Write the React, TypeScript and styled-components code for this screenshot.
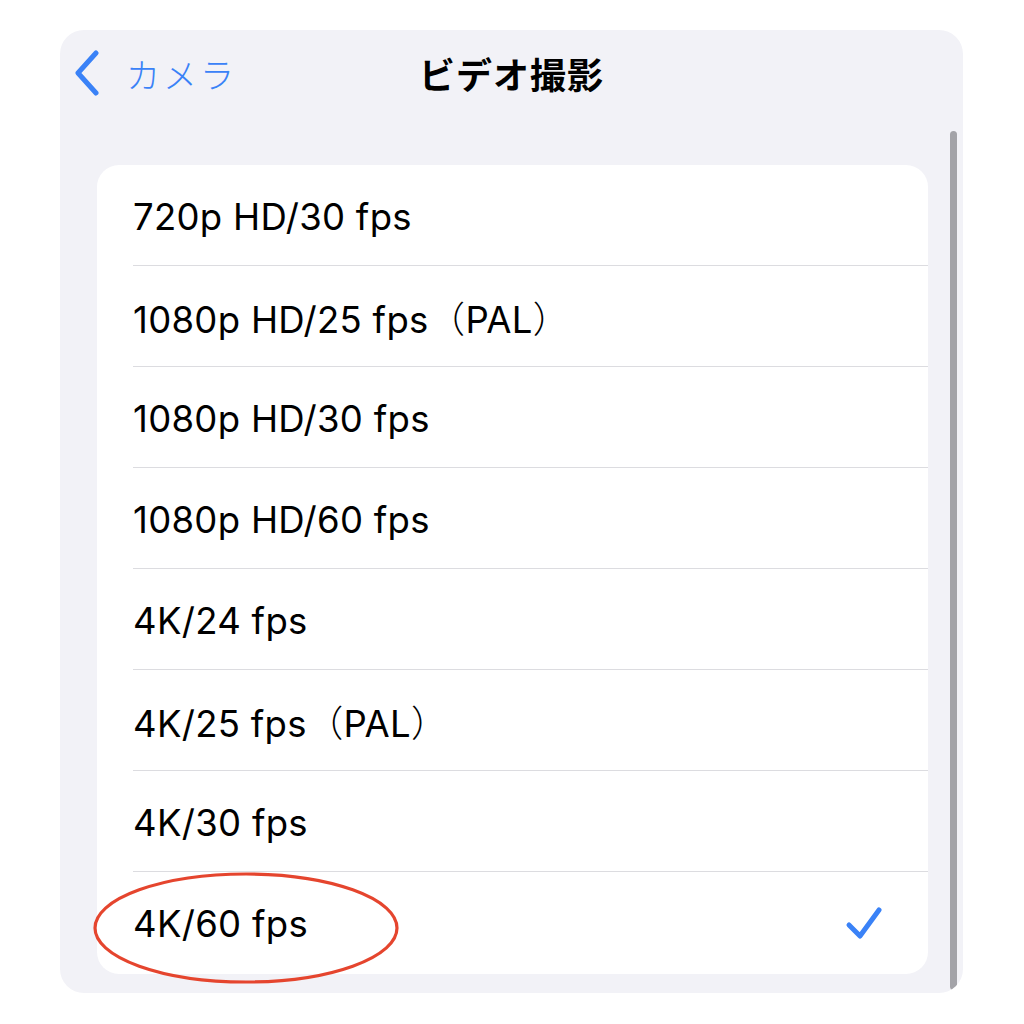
import React from "react";
import styled, { createGlobalStyle } from "styled-components";

const Global = createGlobalStyle`
  html, body { margin: 0; padding: 0; background: #ffffff; }
  body { font-family: Inter, "Noto Sans CJK JP", sans-serif; -webkit-font-smoothing: antialiased; }
`;

const Page = styled.div`
  width: 1024px;
  height: 1024px;
  padding: 30px 0 0 60px;
  box-sizing: border-box;
`;

const Panel = styled.div`
  position: relative;
  width: 903px;
  height: 963px;
  background: #f2f2f7;
  border-radius: 24px;
  box-sizing: border-box;
  padding: 0 35px 0 37px;
  display: flex;
  flex-direction: column;
  overflow: hidden;
`;

const Header = styled.div`
  height: 135px;
  position: relative;
  display: flex;
  align-items: flex-start;
  padding-top: 20px;
  box-sizing: border-box;
`;

const Back = styled.div`
  display: flex;
  align-items: center;
  gap: 26px;
  margin-left: -23px;
  height: 46px;
  color: #3a82f7;
  font-family: "Noto Sans CJK JP", sans-serif;
  font-weight: 300;
  font-size: 34px;
  letter-spacing: 3px;
`;

const Title = styled.div`
  position: absolute;
  left: -37px;
  right: -35px;
  top: 20px;
  height: 46px;
  display: flex;
  align-items: center;
  justify-content: center;
  font-family: "Noto Sans CJK JP", sans-serif;
  font-weight: 700;
  font-size: 36px;
  letter-spacing: 1px;
  color: #000;
  pointer-events: none;
`;

const Card = styled.div`
  background: #ffffff;
  border-radius: 22px;
  display: flex;
  flex-direction: column;
`;

const Row = styled.div<{ $last?: boolean }>`
  height: ${(p) => (p.$last ? "102px" : "101px")};
  display: flex;
  align-items: center;
  justify-content: space-between;
  padding-left: 36px;
  padding-right: 42px;
  padding-top: 2px;
  box-sizing: border-box;
  position: relative;
  &::after {
    content: "";
    display: ${(p) => (p.$last ? "none" : "block")};
    position: absolute;
    left: 36px;
    right: 0;
    bottom: 0;
    height: 1px;
    background: #dcdce0;
  }
`;

const Label = styled.span`
  font-family: Inter, "Noto Sans CJK JP", sans-serif;
  font-size: 36.5px;
  color: #000;
  letter-spacing: 0.3px;
`;

const Paren = styled.span`
  font-family: "Noto Sans CJK JP", sans-serif;
  font-weight: 300;
`;

const Scrollbar = styled.div`
  position: absolute;
  right: 6px;
  top: 101px;
  bottom: 3px;
  width: 7px;
  border-radius: 4px;
  background: #a3a3a8;
`;

const Ellipse = styled.svg`
  position: absolute;
  left: 92px;
  top: 870px;
  overflow: visible;
`;

const items: { main: string; pal?: boolean }[] = [
  { main: "720p HD/30 fps" },
  { main: "1080p HD/25 fps", pal: true },
  { main: "1080p HD/30 fps" },
  { main: "1080p HD/60 fps" },
  { main: "4K/24 fps" },
  { main: "4K/25 fps", pal: true },
  { main: "4K/30 fps" },
  { main: "4K/60 fps" },
];

export default function App() {
  return (
    <>
      <Global />
      <Page>
        <Panel>
          <Header>
            <Back>
              <svg width="26" height="46" viewBox="0 0 26 46">
                <path d="M22 3 L4 23 L22 43" fill="none" stroke="#3a82f7" strokeWidth="5" strokeLinecap="round" strokeLinejoin="round" />
              </svg>
              <span>カメラ</span>
            </Back>
            <Title>ビデオ撮影</Title>
          </Header>
          <Card>
            {items.map((it, i) => (
              <Row key={i} $last={i === items.length - 1}>
                <Label>
                  {it.main}
                  {it.pal && (
                    <>
                      <Paren>（</Paren>PAL<Paren>）</Paren>
                    </>
                  )}
                </Label>
                {i === items.length - 1 && (
                  <svg width="42" height="42" viewBox="0 0 42 42">
                    <path d="M5 22 L16 33 L35 7" fill="none" stroke="#3a82f7" strokeWidth="5" strokeLinecap="round" strokeLinejoin="round" />
                  </svg>
                )}
              </Row>
            ))}
          </Card>
          <Scrollbar />
        </Panel>
      </Page>
      <Ellipse width="310" height="116" viewBox="0 0 310 116">
        <ellipse cx="154" cy="58" rx="151" ry="54" fill="none" stroke="#e5452e" strokeWidth="3.2" />
      </Ellipse>
    </>
  );
}
